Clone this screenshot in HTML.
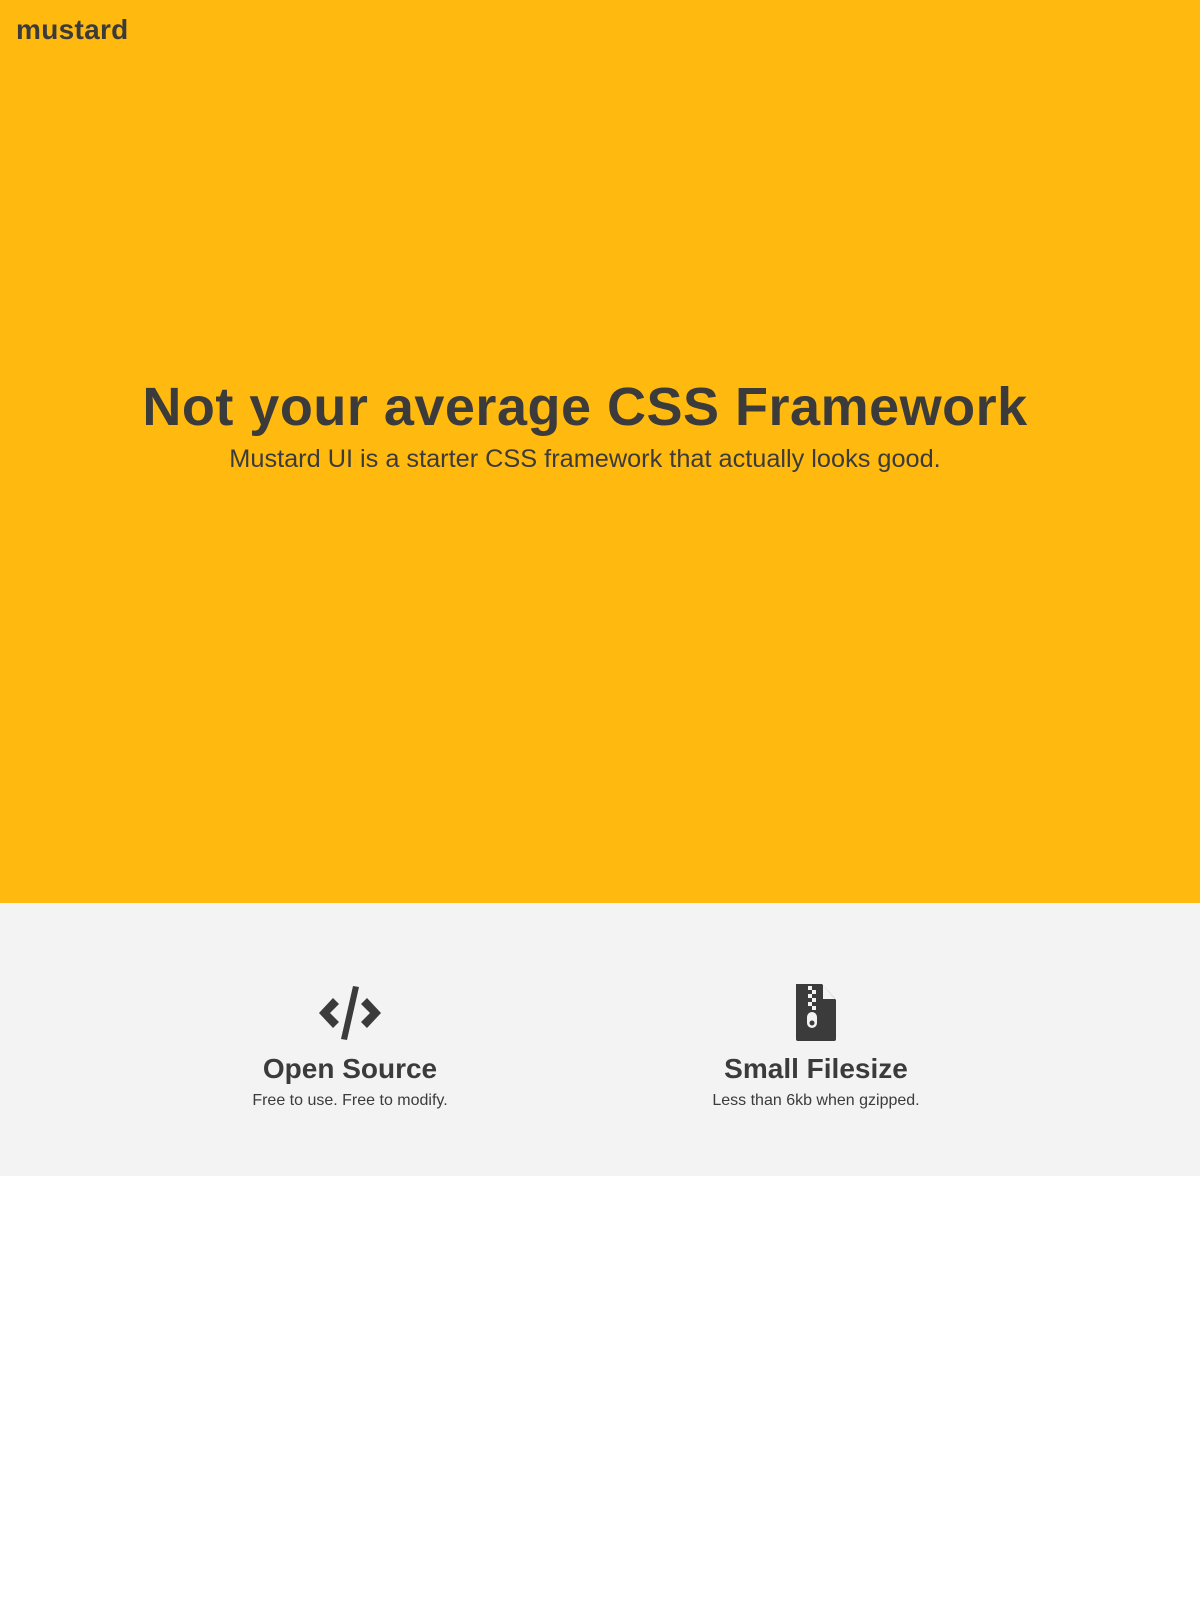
<!DOCTYPE html>
<html><head><meta charset="utf-8"><style>
*{margin:0;padding:0;box-sizing:border-box}
body{width:1200px;height:1599px;background:#fff;font-family:"Liberation Sans",sans-serif;color:#3b3b3b;position:relative;overflow:hidden}
.hero{position:absolute;left:0;top:0;width:1200px;height:903px;background:#FFB90F}
.logo{position:absolute;left:16px;top:14px;font-size:28px;font-weight:bold;letter-spacing:0.3px}
h1{position:absolute;left:-15px;width:1200px;top:376px;text-align:center;font-size:54px;font-weight:bold;letter-spacing:0.5px}
.sub{position:absolute;left:-15px;width:1200px;top:445px;text-align:center;font-size:25.3px}
.feat{position:absolute;left:0;top:903px;width:1200px;height:273px;background:#f3f3f3}
.col{position:absolute;top:0;width:400px;text-align:center}
.col svg{position:absolute;top:81px}
.col h2{position:absolute;top:150px;width:400px;font-size:28px;font-weight:bold}
.col p{position:absolute;top:189px;width:400px;font-size:16px}
</style></head><body>
<div class="hero">
<div class="logo">mustard</div>
<h1>Not your average CSS Framework</h1>
<div class="sub">Mustard UI is a starter CSS framework that actually looks good.</div>
</div>
<div class="feat">
<div class="col" style="left:150px">
<svg style="left:165px" width="70" height="58" viewBox="0 0 70 58"><path d="M18 14 L4 29 L18 44 L24 38 L15 29 L24 20Z M52 14 L66 29 L52 44 L46 38 L55 29 L46 20Z" fill="#3b3b3b"/><path d="M38 2 L44 3 L32 56 L26 55Z" fill="#3b3b3b"/></svg>
<h2>Open Source</h2><p>Free to use. Free to modify.</p>
</div>
<div class="col" style="left:616px">
<svg style="left:178px" width="44" height="58" viewBox="0 0 44 58"><path d="M2 0 H28 L42 16 V55 Q42 57 40 57 H4 Q2 57 2 55Z" fill="#3b3b3b"/><path d="M29 1 L41 15 H29Z" fill="#f3f3f3"/><g fill="#f3f3f3"><rect x="14" y="2" width="4" height="4"/><rect x="18" y="6" width="4" height="4"/><rect x="14" y="10" width="4" height="4"/><rect x="18" y="14" width="4" height="4"/><rect x="14" y="18" width="4" height="4"/><rect x="18" y="22" width="4" height="4"/></g><rect x="13" y="28" width="10" height="16" rx="5" fill="#f3f3f3"/><circle cx="18" cy="39" r="2.5" fill="#3b3b3b"/></svg>
<h2>Small Filesize</h2><p>Less than 6kb when gzipped.</p>
</div>
</div>
</body></html>
